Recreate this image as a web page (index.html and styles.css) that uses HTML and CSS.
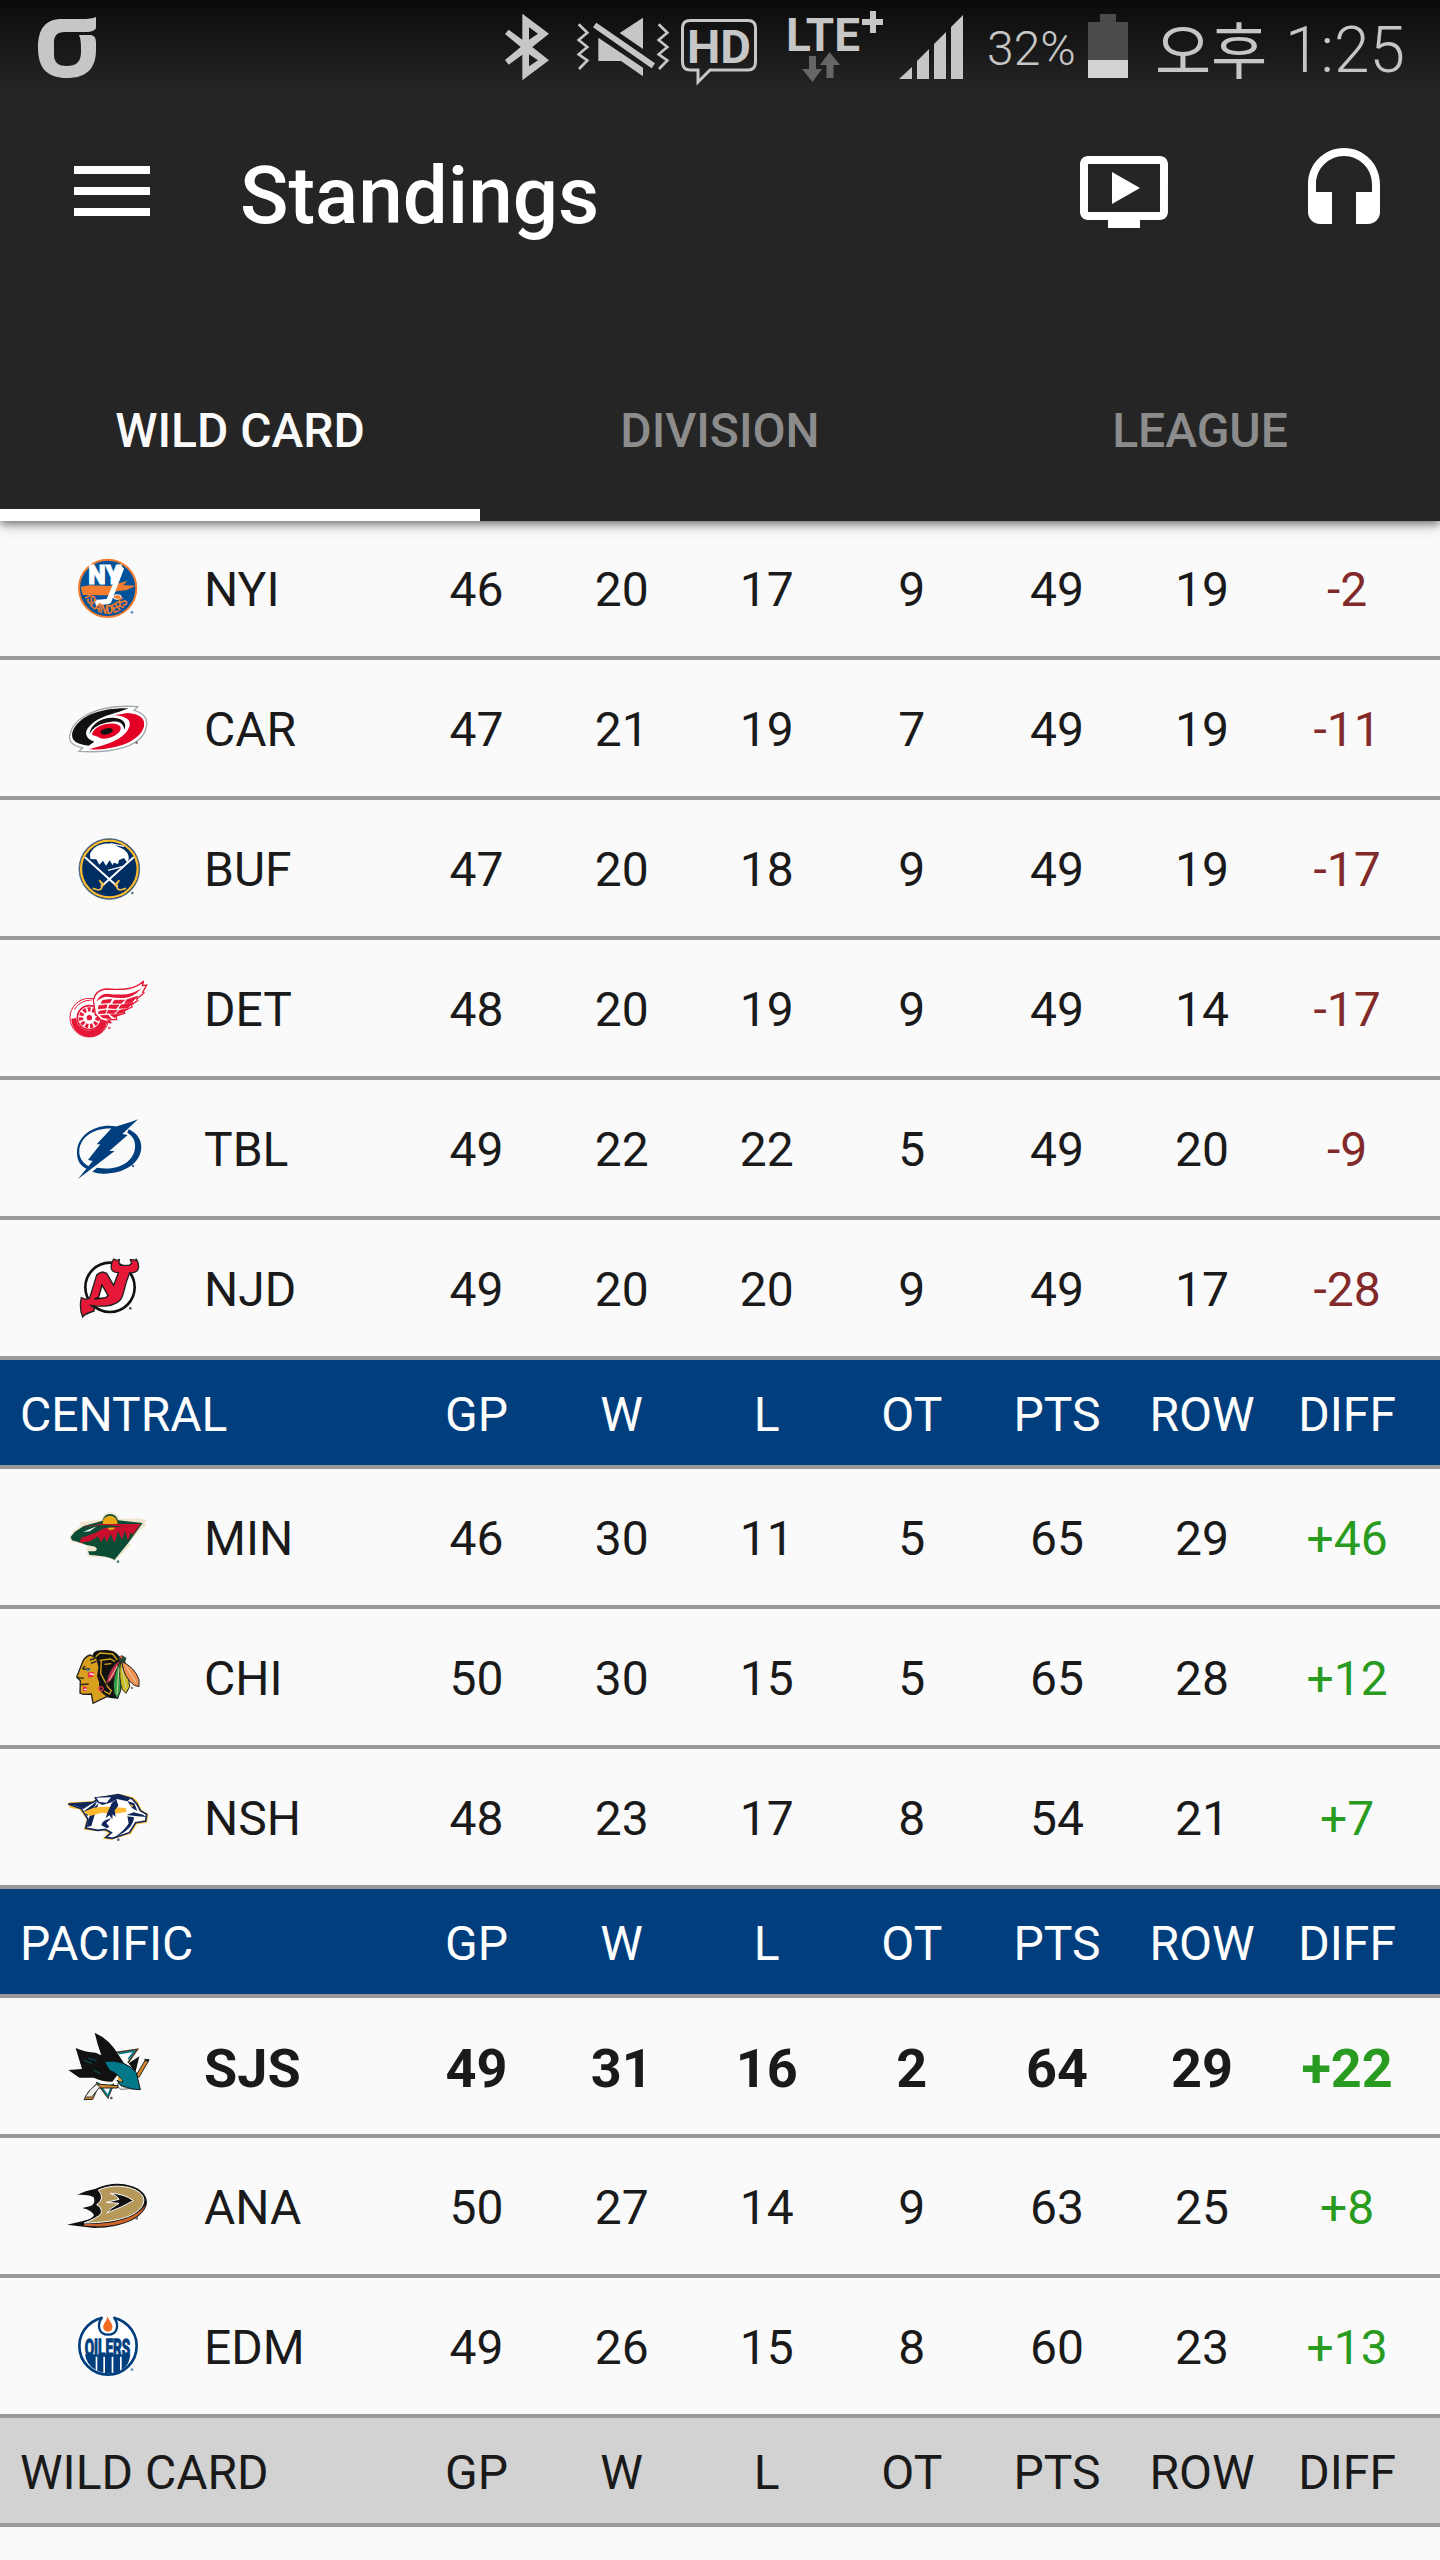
FILE: index.html
```html
<!DOCTYPE html>
<html lang="ko">
<head>
    <meta charset="utf-8">
    <title>Standings</title>
    <meta name="viewport" content="width=device-width, initial-scale=1">
    <link rel="stylesheet" href="styles.css">
</head>
<body>
    <header class="app-header">
        <div class="status-bar">
            <svg class="carrier" viewBox="38 0 58 100" width="58" height="100">
                <path d="M96 17V28Q95 31 88 32H65C57 32 54 36 54 42V55C54 63 59 66 67 66C76 66 81 62 81 52C81 45 81 39 79 35H91Q96 36 96 42V50C96 70 85 78 67 78C48 78 38 69 38 48C38 29 45 19 62 19H82Q91 19 96 17Z"/>
            </svg>
            <!-- bluetooth -->
            <svg class="bt" viewBox="75 0 132 300" width="44" height="100">
                <path d="M127 41L207 101L157 141L207 181L127 241V164L86 194L75 180L122 141L75 102L86 89L127 119ZM147 82V119L174 101ZM147 163V199L174 181Z" fill-rule="evenodd"/>
            </svg>
            <!-- vibrate / mute -->
            <svg class="mute" viewBox="291 0 276 300" width="92" height="100">
                <path class="wave" d="M296 73L322 98L296 120L322 141L296 163L322 181L297 207M536 73L562 98L536 120L562 141L536 163L562 181L537 207"/>
                <path d="M349 68L525 190L515 205L339 82ZM489 53V147L419 99ZM355 113L489 203V229L423 183H355Z"/>
            </svg>
            <svg class="hd" viewBox="681 0 76 100" width="76" height="100">
                <path class="line" d="M690 20.500H748Q755.500 20.500 755.500 28V62Q755.500 70 748 70H710L698 82V70H690Q682.500 70 682.500 62V28Q682.500 20.500 690 20.500Z"/>
                <text x="687" y="62.500" textLength="64" lengthAdjust="spacingAndGlyphs">HD</text>
            </svg>
            <svg class="lte" viewBox="788 0 96 100" width="96" height="100">
                <text x="786" y="51" textLength="74" lengthAdjust="spacingAndGlyphs">LTE</text>
                <path d="M870 11H876V19H883V25H876V33H870V25H862V19H870Z"/>
                <path class="dim" d="M809 56H816V69H822L812.500 82L802 69H809ZM829.500 52L840 65H833.500V78H826.500V65H820Z"/>
            </svg>
            <svg class="signal" viewBox="899 0 64 100" width="64" height="100">
                <path d="M899 79L912 67V79ZM917 79V61L929 49V79ZM934 79V44L946 32V79ZM951 79V27L963 15V79Z"/>
            </svg>
            <span class="percent">32%</span>
            <svg class="battery" viewBox="1088 0 40 100" width="40" height="100">
                <path class="empty" d="M1100 14H1116V22H1128V60H1088V22H1100Z"/>
                <path class="full" d="M1088 60H1128V78H1088Z"/>
            </svg>
            <span class="ampm">오후</span>
            <span class="time">1:25</span>
        </div>

        <div class="toolbar">
            <div class="menu"><i></i><i></i><i></i></div>
            <h1>Standings</h1>
            <svg class="tv" viewBox="0 0 24 24" width="96" height="96">
                <path d="M21 3H3c-1.110 0-2 .89-2 2v12c0 1.100.89 2 2 2h5v2h8v-2h5c1.100 0 1.990-.9 1.990-2L23 5c0-1.110-.9-2-2-2zm0 14H3V5h18v12zm-5-6l-7 4V7z"/>
            </svg>
            <svg viewBox="0 0 24 24" width="96" height="96">
                <path d="M12 1c-4.970 0-9 4.030-9 9v7c0 1.660 1.340 3 3 3h3v-8H5v-2c0-3.870 3.130-7 7-7s7 3.130 7 7v2h-4v8h3c1.660 0 3-1.340 3-3v-7c0-4.970-4.030-9-9-9z"/>
            </svg>
        </div>

        <nav class="tabs">
            <a class="tab active">WILD CARD</a>
            <a class="tab">DIVISION</a>
            <a class="tab">LEAGUE</a>
        </nav>
    </header>

    <main class="standings">
        <div class="row">
            <svg class="logo" viewBox="39 9 270 270">
                <circle cx="173" cy="145" r="91" fill="#fff"/>
                <circle cx="173" cy="145" r="86" fill="#00529b" stroke="#f47d30" stroke-width="6"/>
                <path d="M92 140L120 136L180 138L232 122L220 136L258 137L230 150L200 154L176 166L98 165Z" fill="#f47d30"/>
                <text x="115" y="131" font-size="78" font-weight="900" fill="#fff" stroke="#fff" stroke-width="3" textLength="98" lengthAdjust="spacingAndGlyphs">NY</text>
                <path d="M213 76L222 86L183 188Q178 194 168 193L138 198L134 180L170 177Z" fill="#fff"/>
                <ellipse cx="202" cy="171" rx="12" ry="7" fill="#f47d30" stroke="#fff" stroke-width="3"/>
                <path id="nyi-arc" d="M102 170Q128 222 173 222Q218 222 244 168" fill="none"/>
                <text font-size="38" font-weight="700" fill="#f47d30"><textPath href="#nyi-arc" textLength="168" lengthAdjust="spacingAndGlyphs">ISLANDERS</textPath></text>
                <circle cx="246" cy="217" r="4" fill="#5b8dbb"/>
            </svg>
            <span class="team">NYI</span>
            <span>46</span><span>20</span><span>17</span><span>9</span><span>49</span><span>19</span><span class="minus">-2</span>
        </div>
        <div class="row">
            <svg class="logo" viewBox="39 429 270 270">
                <path d="M263 500L252 511C284 520 293 540 289 560C282 603 236 625 170 633Q130 637 87 634L98 624C62 615 55 602 60 583C68 541 120 510 190 501Q225 497 263 500Z" fill="#fff" stroke="#a2aaad" stroke-width="4"/>
                <path d="M236 505C150 503 84 528 67 577C62 602 78 613 116 617L133 605C103 594 100 572 126 551C151 530 178 524 208 515Z" fill="#111"/>
                <path d="M232 519L193 526C238 529 249 548 232 572C216 596 181 611 116 628C187 631 267 609 282 560C287 535 269 521 232 519Z" fill="#e30024"/>
                <path d="M118 583C121 554 152 532 190 533C222 535 231 551 223 569C220 548 205 542 181 546C151 550 129 561 118 583Z" fill="#111"/>
                <path d="M126 584C131 560 164 548 193 551C214 554 218 565 205 579C187 595 157 601 145 591Z" fill="#e30024"/>
                <ellipse cx="170" cy="574" rx="19" ry="9" fill="#111" transform="rotate(-14 170 574)"/>
                <circle cx="260" cy="608" r="4" fill="#777"/>
            </svg>
            <span class="team">CAR</span>
            <span>47</span><span>21</span><span>19</span><span>7</span><span>49</span><span>19</span><span class="minus">-11</span>
        </div>
        <div class="row">
            <svg class="logo" viewBox="39 849 270 270">
                <circle cx="178" cy="987" r="91" fill="#002d62" stroke="#55708f" stroke-width="3"/>
                <circle cx="178" cy="987" r="85" fill="none" stroke="#fdbb2f" stroke-width="7"/>
                <path d="M120 942Q129 920 151 914Q184 904 207 922Q228 928 235 946Q239 960 231 967L222 954L207 960L204 972L191 968L188 976L179 961L168 977L159 962L148 974L139 958L121 957Z" fill="#fff"/>
                <path d="M174 991L217 980M181 911L222 919" stroke="#fff" stroke-width="4"/>
                <path d="M105 952L203 1040M251 952L153 1040" stroke="#fff" stroke-width="6"/>
                <path d="M128 1045L145 1050Q157 1048 157 1034L148 1021L163 1036M228 1045L211 1050Q199 1048 199 1034L208 1021L193 1036" fill="none" stroke="#f5bd45" stroke-width="5"/>
                <circle cx="247" cy="1059" r="4" fill="#5c7792"/>
            </svg>
            <span class="team">BUF</span>
            <span>47</span><span>20</span><span>18</span><span>9</span><span>49</span><span>19</span><span class="minus">-17</span>
        </div>
        <div class="row">
            <svg class="logo" viewBox="39 69 270 270">
                <circle cx="118" cy="233" r="58" fill="#fff" stroke="#e51937" stroke-width="3"/>
                <path d="M64 236A54 54 0 0 0 172 238L154 234A37 37 0 0 1 79 234Z" fill="#e51937"/>
                <path d="M73 209Q88 181 125 180" fill="none" stroke="#e51937" stroke-width="3"/>
                <circle cx="118" cy="233" r="36" fill="#fff" stroke="#e51937" stroke-width="5"/>
                <circle cx="118" cy="233" r="25" fill="none" stroke="#e51937" stroke-width="13" stroke-dasharray="9 5"/>
                <circle cx="118" cy="233" r="10" fill="#e51937" stroke="#fff" stroke-width="4"/>
                <path d="M130 180Q137 151 166 147C224 151 258 147 281 123L277 137L290 135L278 157L282 159L260 177L263 182L244 195L246 201L222 213L224 220L197 228L200 238L174 240L184 249L153 240L136 222Z" fill="#fff" stroke="#e51937" stroke-width="4"/>
                <path d="M139 185Q148 162 169 161C220 167 251 163 275 143C250 178 214 177 178 171Q158 168 139 185Z" fill="#e51937"/>
                <path d="M158 181L185 178L180 188L153 190ZM193 181L224 180L214 190L188 190ZM230 179L264 168L246 186L224 190ZM146 197L171 194L169 204L145 207ZM179 195L207 195L198 206L175 204ZM213 195L250 187L234 204L207 205ZM147 214L169 210L166 220L145 221ZM175 211L202 211L191 221L171 219ZM208 211L233 206L218 219L198 221ZM151 227L174 225L184 237L158 233ZM181 224L208 223L194 233Z" fill="#e51937" stroke="#e51937" stroke-width="2"/>
                <circle cx="178" cy="264" r="4" fill="#e95367"/>
            </svg>
            <span class="team">DET</span>
            <span>48</span><span>20</span><span>19</span><span>9</span><span>49</span><span>14</span><span class="minus">-17</span>
        </div>
        <div class="row">
            <svg class="logo" viewBox="39 489 270 270">
                <path d="M198 559C139 549 83 583 81 635C80 661 91 677 111 687L118 680C95 667 86 650 88 630C92 589 135 562 188 566ZM236 568C263 580 274 601 274 622C273 670 220 703 158 701Q142 701 127 695L141 683C195 693 250 672 255 624C257 604 250 589 232 578Z" fill="#003e7e"/>
                <path d="M264 538L217 582L233 585L178 633L194 633L84 717L128 663L114 660L151 613L140 613L186 563C213 555 237 549 264 538Z" fill="#003e7e"/>
                <circle cx="249" cy="678" r="4" fill="#45739e"/>
            </svg>
            <span class="team">TBL</span>
            <span>49</span><span>22</span><span>22</span><span>5</span><span>49</span><span>20</span><span class="minus">-9</span>
        </div>
        <div class="row">
            <svg class="logo" viewBox="39 909 270 270">
                <circle cx="180" cy="1042" r="74" fill="#fff" stroke="#111" stroke-width="8"/>
                <path d="M191 957Q178 978 187 992Q194 998 205 998L191 1036L170 1000L158 996Q146 998 140 1005L119 1074L107 1078L94 1073Q87 1105 98 1131Q103 1122 132 1113L133 1105L122 1096C158 1100 180 1101 201 1088C219 1079 219 1060 229 1026L239 998Q262 999 265 985Q268 970 258 956L259 962Q249 958 241 959L245 970L238 976H211L207 970L208 959L199 961Z" fill="#e51937" stroke="#222" stroke-width="4"/>
                <path d="M156 1035L174 1066L168 1073L133 1077L146 1071Z" fill="#fff" stroke="#111" stroke-width="4"/>
                <circle cx="241" cy="1105" r="4" fill="#555"/>
            </svg>
            <span class="team">NJD</span>
            <span>49</span><span>20</span><span>20</span><span>9</span><span>49</span><span>17</span><span class="minus">-28</span>
        </div>

        <div class="row head">
            <span class="title">CENTRAL</span>
            <span>GP</span><span>W</span><span>L</span><span>OT</span><span>PTS</span><span>ROW</span><span>DIFF</span>
        </div>
        <div class="row">
            <svg class="logo" viewBox="39 6 270 270">
                <path d="M58 142L70 124L92 107L90 96L154 88Q160 68 180 67Q202 67 209 87L262 85L291 90L284 99L289 105L265 125L237 159L242 164L193 215Q178 200 145 202L114 200L109 179L112 168L87 160L63 155Z" fill="#f0e6cf"/>
                <path d="M62 141L74 126L101 108L158 92Q162 73 180 72Q199 73 204 91L278 99L234 160L193 210Q178 198 119 195L114 184L135 184Q146 177 135 170L110 165L87 157L66 151Z" fill="#0b4c35"/>
                <circle cx="180" cy="99" r="22" fill="#eaaa15"/>
                <path d="M96 111L169 99L205 102L272 102L249 134L242 127L234 153L225 122L216 149L204 123L194 158L182 132L170 157L163 139L154 157L143 139L122 153L88 159L94 144L137 128L171 109Z" fill="#c8102e"/>
                <path d="M159 94Q180 100 204 97L201 102L159 102ZM169 111L197 113Q190 120 180 121Z" fill="#eaaa15"/>
                <path d="M97 115Q145 98 220 110Q148 110 117 132L91 130L107 122Z" fill="#0b4c35"/>
                <path d="M99 126L140 109L119 124Z" fill="#fff"/>
                <path d="M111 168L131 170L139 179L130 183L112 178Z" fill="#f0e6cf"/>
                <circle cx="204" cy="215" r="4" fill="#4b8270"/>
            </svg>
            <span class="team">MIN</span>
            <span>46</span><span>30</span><span>11</span><span>5</span><span>65</span><span>29</span><span class="plus">+46</span>
        </div>
        <div class="row">
            <svg class="logo" viewBox="39 426 270 270">
                <path d="M127 499Q129 480 153 481Q192 475 207 498L228 519L205 625Q179 627 162 617L143 602Z" fill="#111"/>
                <path d="M121 495Q101 500 94 526L80 561L91 572L90 609L100 613L124 612L129 640L172 619L158 608Q147 600 149 577L143 558L147 531L140 505Z" fill="#d9a01d" stroke="#222" stroke-width="4"/>
                <path d="M137 500L150 489L188 492L202 510M149 511L181 507L195 514M154 512L152 551L174 592L184 602L178 612L162 603M163 523L184 521" fill="none" stroke="#d5a51c" stroke-width="4"/>
                <path d="M99 538L119 536M97 536L106 528M82 563L102 565M91 584L116 582M120 510L135 505M123 520L139 514" fill="none" stroke="#222" stroke-width="4"/>
                <path d="M109 538H121V543H109Z" fill="#3b83b0"/>
                <path d="M113 547L132 546L130 560L114 563ZM99 588L111 592L110 604L99 604Z" fill="#e5344d"/>
                <path d="M119 551L132 554M102 599L110 598" stroke="#fff" stroke-width="4"/>
                <path d="M209 512Q179 528 167 584Q199 567 211 513Z" fill="#c72c49" stroke="#222" stroke-width="3"/>
                <path d="M211 513Q184 562 192 609L202 627L211 605Q217 569 211 513Z" fill="#31a047" stroke="#222" stroke-width="3"/>
                <path d="M212 513Q204 562 217 599L228 610L239 590Q236 549 212 513Z" fill="#c6bd27" stroke="#222" stroke-width="3"/>
                <path d="M215 514Q221 564 253 586L267 590V569Q254 532 215 514Z" fill="#ef9152" stroke="#222" stroke-width="3"/>
                <path d="M202 528L177 572M207 535L201 613M216 536L229 597M228 529L258 577" stroke="#ddd4ac" stroke-width="3"/>
                <path d="M204 500L216 496L229 503L226 516L211 517Z" fill="#254b38"/>
                <circle cx="213" cy="501" r="4" fill="#db5938"/>
                <circle cx="153" cy="596" r="6" fill="none" stroke="#e5344d" stroke-width="4"/>
                <circle cx="246" cy="594" r="3" fill="#555"/>
            </svg>
            <span class="team">CHI</span>
            <span>50</span><span>30</span><span>15</span><span>5</span><span>65</span><span>28</span><span class="plus">+12</span>
        </div>
        <div class="row">
            <svg class="logo" viewBox="39 846 270 270">
                <path d="M52 941L60 937L129 933L145 921L206 911L250 922L264 936L275 960L295 972L291 998L260 1003L243 1031L185 1049L158 1046L175 1029L159 1021L144 1024L101 1019L110 988L88 958L61 954Z" fill="#fdb930"/>
                <path d="M55 942L130 937L147 924L205 914L246 926L260 941L271 962L290 973L287 993L257 998L238 1028L187 1045L168 1042L184 1028L166 1018L143 1021L107 1014L114 988L94 956Z" fill="#fff" stroke="#10265b" stroke-width="5"/>
                <path d="M55 942L132 937L100 957L79 948ZM102 964L142 933L135 948L112 978ZM116 986L126 959L146 939L137 965L124 1008L110 1011ZM132 922L205 914L241 926L232 934L201 927L185 937L157 945L142 937Z" fill="#10265b"/>
                <path d="M139 923L183 922L170 938L148 936Z" fill="#fff"/>
                <path d="M100 966L131 953Q164 948 191 951L227 954L230 966L190 972L155 968L120 978Z" fill="#fdb930"/>
                <path d="M186 938L199 928L205 947L194 961L197 981L188 973L187 988L178 976L167 985L172 968ZM232 933L253 940L262 963L246 954ZM251 967L279 974L289 981L263 979L230 975ZM232 979L252 982Q250 1018 195 1041Q227 1018 236 1000ZM154 1006Q155 991 184 985L169 999L178 1010L171 1015Z" fill="#10265b"/>
                <path d="M240 942L252 948L245 951Z" fill="#fdb930"/>
                <circle cx="205" cy="1049" r="4" fill="#536888"/>
            </svg>
            <span class="team">NSH</span>
            <span>48</span><span>23</span><span>17</span><span>8</span><span>54</span><span>21</span><span class="plus">+7</span>
        </div>

        <div class="row head">
            <span class="title">PACIFIC</span>
            <span>GP</span><span>W</span><span>L</span><span>OT</span><span>PTS</span><span>ROW</span><span>DIFF</span>
        </div>
        <div class="row favorite">
            <svg class="logo" viewBox="39 33 270 270">
                <path d="M139 216L174 263L191 221M197 128L262 118L234 158" fill="#fff" stroke="#4c351c" stroke-width="5"/>
                <path d="M145 218L174 258L187 222M206 131L253 123L235 148" fill="none" stroke="#00788a" stroke-width="5"/>
                <path d="M287 148L297 150L267 202L259 195Z" fill="#d8862a" stroke="#222" stroke-width="3"/>
                <path d="M283 146L298 148L295 156L285 153Z" fill="#222"/>
                <path d="M268 139L236 160L256 188ZM134 68Q180 88 208 138L225 164L187 215Q159 216 131 203L88 203L55 180L96 177L77 114Q110 128 137 128L154 136Q141 100 134 68Z" fill="#111"/>
                <path d="M163 154Q225 147 259 188L271 239L246 237L213 227L201 211L219 217Q205 190 178 181Z" fill="#00788a" stroke="#111" stroke-width="3"/>
                <path d="M204 199L215 209L215 216L204 210Z" fill="#eea52b"/>
                <path d="M204 219L214 229L241 236L213 238L202 230Z" fill="#fff" stroke="#222" stroke-width="2"/>
                <path d="M102 151L126 160M115 145L140 152M131 180L151 191" stroke="#075c66" stroke-width="3"/>
                <path d="M139 222L205 227L202 234L144 234L128 268L102 269L116 244Z" fill="#d8862a" stroke="#222" stroke-width="3"/>
                <path d="M139 223L150 230L125 261H105L121 239Z" fill="#eee" stroke="#444" stroke-width="3"/>
                <circle cx="184" cy="264" r="4" fill="#555"/>
            </svg>
            <span class="team">SJS</span>
            <span>49</span><span>31</span><span>16</span><span>2</span><span>64</span><span>29</span><span class="plus">+22</span>
        </div>
        <div class="row">
            <svg class="logo" viewBox="39 453 270 270">
                <path d="M82 554L107 544L137 536Q170 521 203 521C261 523 291 549 291 577C287 620 224 654 132 654L51 644L99 633Q130 626 132 616Q126 601 97 594L119 589Q137 584 132 563Q124 553 82 554Z" fill="#111"/>
                <path d="M145 540C177 527 205 526 235 532C274 542 284 561 281 576C273 616 203 638 103 639Q139 626 154 610Q156 591 140 584Q167 566 145 540Z" fill="#b5985a" stroke="#fff" stroke-width="3"/>
                <path d="M105 641C191 646 263 622 286 585C275 627 206 652 132 649L101 647Z" fill="#c9652c"/>
                <path d="M181 550Q223 551 250 572Q218 591 170 609Q182 594 207 580L169 577L207 568Q204 559 181 550Z" fill="#111" stroke="#fff" stroke-width="3"/>
                <circle cx="260" cy="625" r="4" fill="#666"/>
            </svg>
            <span class="team">ANA</span>
            <span>50</span><span>27</span><span>14</span><span>9</span><span>63</span><span>25</span><span class="plus">+8</span>
        </div>
        <div class="row">
            <svg class="logo" viewBox="39 873 270 270">
                <circle cx="174" cy="1008" r="86" fill="#fff" stroke="#003e7e" stroke-width="8"/>
                <path d="M105 1033H241Q239 1065 215 1080V1032H210V1083Q200 1088 190 1089V1032H185V1090H165V1032H160V1088L142 1082V1032H137V1080Q109 1064 105 1033Z" fill="#003e7e"/>
                <text transform="translate(104 1037) scale(.56 1)" font-size="73" font-weight="700" fill="#003e7e" stroke="#003e7e" stroke-width="4">OILERS</text>
                <path d="M155 917H193Q190 923 201 939C205 958 196 975 174 976C149 975 141 955 148 938Z" fill="#fff"/>
                <path d="M157 921C139 944 146 974 174 974C203 974 209 944 191 921" fill="none" stroke="#003e7e" stroke-width="7"/>
                <path d="M172 919Q176 929 183 938C193 952 184 965 174 965C161 965 154 951 165 937Q171 930 172 919Z" fill="#f26b21"/>
                <circle cx="246" cy="1079" r="4" fill="#6d8fb6"/>
            </svg>
            <span class="team">EDM</span>
            <span>49</span><span>26</span><span>15</span><span>8</span><span>60</span><span>23</span><span class="plus">+13</span>
        </div>

        <div class="row head gray">
            <span class="title">WILD CARD</span>
            <span>GP</span><span>W</span><span>L</span><span>OT</span><span>PTS</span><span>ROW</span><span>DIFF</span>
        </div>
    </main>
</body>
</html>
```

FILE: styles.css
```css
* {
    box-sizing: border-box;
}
body {
    margin: 0;
    width: 1440px;
    height: 2560px;
    overflow: hidden;
    background: #fafafa;
    color: #1a1a1a;
    font-family: Roboto, "Noto Sans CJK KR", sans-serif;
}
svg {
    display: block;
    flex: none;
    overflow: visible;
}

/* header */
.app-header {
    position: relative;
    z-index: 1;
    height: 521px;
    background: linear-gradient(#0b0b0b, #252525 92px);
    box-shadow: 0 3px 8px rgba(0, 0, 0, 0.45), 0 5px 14px rgba(0, 0, 0, 0.16);
}
.status-bar {
    display: flex;
    align-items: center;
    height: 100px;
    padding-left: 38px;
    fill: #c6c6c6;
    color: #c6c6c6;
    white-space: nowrap;
}
.bt {
    margin-left: 409px;
}
.mute {
    margin-left: 28px;
}
.wave {
    fill: none;
    stroke: #c6c6c6;
    stroke-width: 8;
}
.hd {
    margin-left: 12px;
}
.hd text {
    font-size: 47px;
    font-weight: 700;
}
.line {
    fill: none;
    stroke: #c6c6c6;
    stroke-width: 3;
}
.lte {
    margin-left: 31px;
}
.lte text {
    font-size: 47px;
    font-weight: 700;
}
.dim {
    fill: #666;
}
.signal {
    margin-left: 15px;
}
.percent {
    width: 90px;
    margin-left: 24px;
    padding-bottom: 4px;
    font-size: 48px;
    font-weight: 300;
}
.battery {
    margin-left: 11px;
}
.empty {
    fill: #4b4b4b;
}
.full {
    fill: #d2d2d2;
}
.ampm {
    width: 118px;
    margin-left: 27px;
    padding-bottom: 5px;
    font-family: "Noto Sans CJK KR", sans-serif;
    font-size: 61px;
    font-weight: 400;
    line-height: 95px;
}
.time {
    margin-left: 12px;
    font-size: 64px;
    font-weight: 300;
}

.toolbar {
    display: flex;
    align-items: center;
    height: 184px;
    padding: 0 48px 0 74px;
    fill: #fff;
}
.menu {
    display: flex;
    flex-direction: column;
    gap: 13px;
    width: 76px;
    margin-bottom: 2px;
}
.menu i {
    height: 8px;
    background: #fff;
}
h1 {
    flex: 1;
    margin: 8px 0 0 90px;
    color: #fff;
    font-size: 80px;
    font-weight: 500;
}
.tv {
    margin-right: 124px;
}

.tabs {
    display: flex;
    height: 237px;
}
.tab {
    flex: 1;
    padding-top: 118px;
    border-bottom: 12px solid transparent;
    color: #8c8c8c;
    font-size: 48px;
    font-weight: 500;
    text-align: center;
}
.tab.active {
    border-color: #fff;
    color: #fafafa;
}

/* table */
.standings {
    margin-top: -1px;
}
.row {
    display: grid;
    grid-template-columns: 63px 90px 251px repeat(7, 145.1px);
    align-items: center;
    height: 140px;
    border-bottom: 4px solid #999;
    font-size: 48px;
    text-align: center;
}
.row span {
    padding-top: 3px;
}
.row .logo {
    grid-column: 2;
    width: 90px;
    height: 90px;
}
.row .team {
    padding-left: 51px;
    text-align: left;
}
.head {
    height: 109px;
    background: #003e7e;
    color: #fff;
}
.row .title {
    grid-column: 1 / 4;
    padding-left: 20px;
    text-align: left;
}
.gray {
    background: #d2d2d2;
    color: #1a1a1a;
}
.favorite {
    font-size: 54px;
    font-weight: 700;
}
.favorite span {
    padding-top: 4px;
}
.minus {
    color: #822a2a;
}
.plus {
    color: #299b20;
}
```
